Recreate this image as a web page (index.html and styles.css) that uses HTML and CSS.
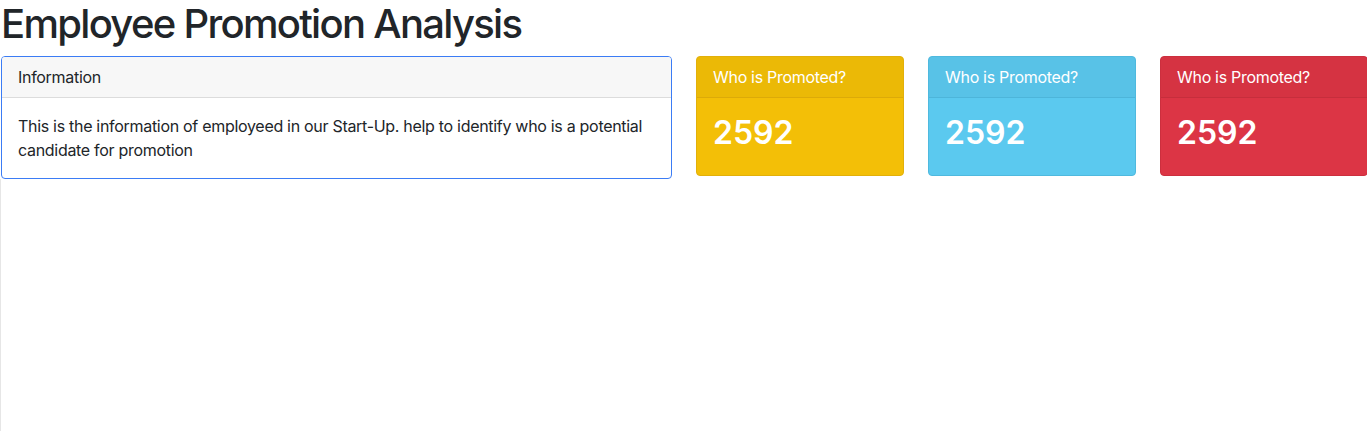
FILE: index.html
```html
<!DOCTYPE html>
<html lang="en">
<head>
<meta charset="utf-8">
<title>Employee Promotion Analysis</title>
<link rel="stylesheet" href="styles.css">
</head>
<body>
<div class="page">
  <h1 class="title">Employee Promotion Analysis</h1>
  <div class="row">
    <div class="card info">
      <div class="card-header">Information</div>
      <div class="card-body">
        <p class="text">This is the information of employeed in our Start-Up. help to identify who is a potential candidate for promotion</p>
      </div>
    </div>
    <div class="card stat warning">
      <div class="card-header">Who is Promoted?</div>
      <div class="card-body"><h2 class="num">2592</h2></div>
    </div>
    <div class="card stat info-color">
      <div class="card-header">Who is Promoted?</div>
      <div class="card-body"><h2 class="num">2592</h2></div>
    </div>
    <div class="card stat danger">
      <div class="card-header">Who is Promoted?</div>
      <div class="card-body"><h2 class="num">2592</h2></div>
    </div>
  </div>
  <div class="below"></div>
</div>
</body>
</html>
```

FILE: styles.css
```css
* { box-sizing: border-box; }
html, body { margin: 0; padding: 0; }
body {
  font-family: Inter, "Noto Sans", "Liberation Sans", sans-serif;
  font-size: 16px;
  line-height: 1.5;
  letter-spacing: -0.3px;
  color: #212529;
  background: #fff;
  overflow: hidden;
}
.page { padding-left: 1px; }
.title {
  margin: 0 0 8px 0;
  font-size: 40px;
  font-weight: 500;
  line-height: 1.2;
  letter-spacing: -1.7px;
}
.row {
  display: flex;
  align-items: flex-start;
  gap: 24px;
  width: 1400px;
}
.card {
  border: 1px solid rgba(0,0,0,.125);
  border-radius: 4px;
  overflow: hidden;
  flex: none;
}
.card-header {
  padding: 8px 16px;
  background: rgba(0,0,0,.03);
  border-bottom: 1px solid rgba(0,0,0,.125);
}
.card-body { padding: 16px; }
.info { width: 671px; border-color: #3b7cf5; }
.info .card-header { background: #f7f7f7; border-bottom-color: #dcdcdc; }
.text { margin: 0; }
.stat { width: 208px; color: #fff; }
.num {
  margin: 0 0 7px 0;
  font-size: 32px;
  font-weight: 600;
  line-height: 1.2;
  letter-spacing: 0;
}
.warning { background: #f3bf07; border-color: #e2b00a; }
.warning .card-header { border-bottom-color: #dcaa08; }
.info-color { background: #5bc9ef; border-color: #4fb9de; }
.info-color .card-header { border-bottom-color: #4db5da; }
.danger { background: #dc3545; border-color: #cc2f3e; }
.danger .card-header { border-bottom-color: #c62e3c; }
.below {
  margin-left: -1px;
  height: 260px;
  border-left: 1px solid #e6e6e6;
}
```
